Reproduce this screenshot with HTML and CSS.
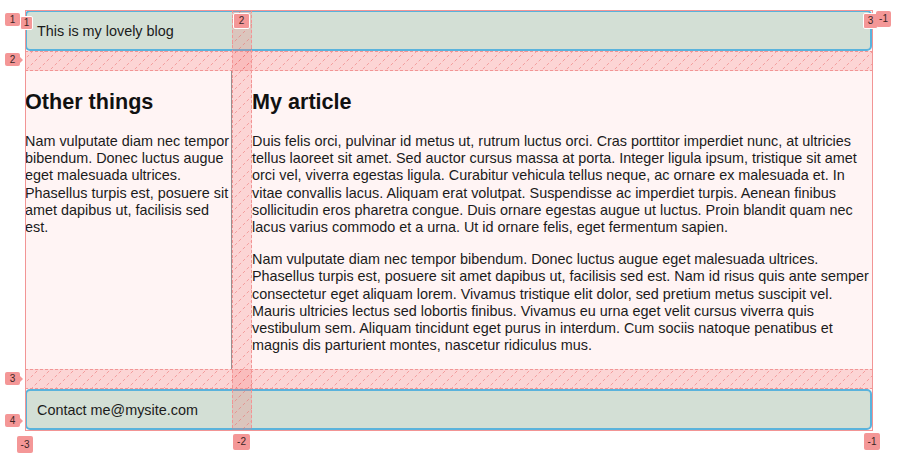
FILE: index.html
```html
<!DOCTYPE html>
<html>
<head>
<meta charset="utf-8">
<link rel="stylesheet" href="styles.css">
</head>
<body>
<div class="wrapper">
  <header class="box head">This is my lovely blog</header>
  <aside class="side">
    <h1>Other things</h1>
    <p>Nam vulputate diam nec tempor bibendum. Donec luctus augue eget malesuada ultrices. Phasellus turpis est, posuere sit amet dapibus ut, facilisis sed est.</p>
  </aside>
  <article class="main">
    <h1>My article</h1>
    <p>Duis felis orci, pulvinar id metus ut, rutrum luctus orci. Cras porttitor imperdiet nunc, at ultricies tellus laoreet sit amet. Sed auctor cursus massa at porta. Integer ligula ipsum, tristique sit amet orci vel, viverra egestas ligula. Curabitur vehicula tellus neque, ac ornare ex malesuada et. In vitae convallis lacus. Aliquam erat volutpat. Suspendisse ac imperdiet turpis. Aenean finibus sollicitudin eros pharetra congue. Duis ornare egestas augue ut luctus. Proin blandit quam nec lacus varius commodo et a urna. Ut id ornare felis, eget fermentum sapien.</p>
    <p>Nam vulputate diam nec tempor bibendum. Donec luctus augue eget malesuada ultrices. Phasellus turpis est, posuere sit amet dapibus ut, facilisis sed est. Nam id risus quis ante semper consectetur eget aliquam lorem. Vivamus tristique elit dolor, sed pretium metus suscipit vel. Mauris ultricies lectus sed lobortis finibus. Vivamus eu urna eget velit cursus viverra quis vestibulum sem. Aliquam tincidunt eget purus in interdum. Cum sociis natoque penatibus et magnis dis parturient montes, nascetur ridiculus mus.</p>
  </article>
  <footer class="box foot">Contact me@mysite.com</footer>
</div>

<svg class="overlay" width="902" height="465" viewBox="0 0 902 465">
  <defs>
    <pattern id="hatch" patternUnits="userSpaceOnUse" width="12" height="12">
      <line x1="-1" y1="13" x2="13" y2="-1" stroke="rgba(236,100,100,0.5)" stroke-width="1" stroke-dasharray="3 2.5"/>
    </pattern>
  </defs>
  <g class="gaps">
    <rect x="25" y="51" width="847" height="20" fill="rgba(244,120,120,0.25)"/>
    <rect x="25" y="369" width="847" height="20" fill="rgba(244,120,120,0.25)"/>
    <rect x="232" y="10" width="20" height="420" fill="rgba(244,120,120,0.25)"/>
    <rect x="25" y="51" width="847" height="20" fill="url(#hatch)"/>
    <rect x="25" y="369" width="847" height="20" fill="url(#hatch)"/>
    <rect x="232" y="10" width="20" height="420" fill="url(#hatch)"/>
  </g>
  <g stroke="#f29595" stroke-width="1" stroke-dasharray="3 2" fill="none">
    <line x1="25" y1="51.5" x2="872" y2="51.5"/>
    <line x1="25" y1="70.5" x2="872" y2="70.5"/>
    <line x1="25" y1="369.5" x2="872" y2="369.5"/>
    <line x1="25" y1="388.5" x2="872" y2="388.5"/>
    <line x1="232.5" y1="10" x2="232.5" y2="430"/>
    <line x1="251.5" y1="10" x2="251.5" y2="430"/>
  </g>
  <rect x="25.5" y="10.5" width="847" height="420" fill="none" stroke="#f29595" stroke-width="1"/>
</svg>

<div class="badge row" style="left:5px;top:13px">1</div>
<div class="badge row" style="left:5px;top:53px">2</div>
<div class="badge row" style="left:5px;top:372px">3</div>
<div class="badge row" style="left:5px;top:414px">4</div>

<div class="badge col" style="left:20px;top:16px;width:13px;height:14px">1</div>
<div class="badge col" style="left:233px;top:13px;width:17px;height:16px">2</div>
<div class="badge col" style="left:863px;top:13px;width:15px;height:16px">3</div>
<div class="badge plain" style="left:876px;top:11px;width:15px;height:16px">-1</div>

<div class="badge plain" style="left:17px;top:436px;width:16px;height:17px">-3</div>
<div class="badge plain" style="left:233px;top:434px;width:17px;height:16px">-2</div>
<div class="badge plain" style="left:864px;top:433px;width:16px;height:17px">-1</div>
</body>
</html>
```

FILE: styles.css
```css
html, body {
  margin: 0;
  padding: 0;
}
body {
  position: relative;
  width: 902px;
  height: 465px;
  overflow: hidden;
  background: #ffffff;
  font-family: "Liberation Sans", Arial, sans-serif;
  font-size: 14.4px;
  color: #1b1b1b;
}
.wrapper {
  margin: 10px 0 0 25px;
  width: 847px;
  display: grid;
  grid-template-columns: 207px 620px;
  grid-template-rows: 41px auto 41px;
  gap: 20px;
  background: #fff4f4;
}
.box {
  grid-column: 1 / 3;
  box-sizing: border-box;
  background: #d3dfd5;
  border: 2px solid #5ab3dc;
  border-radius: 5px;
  padding: 0 10px;
  display: flex;
  align-items: center;
  line-height: 16px;
}
.side {
  border-right: 1px solid #9a9090;
}
.side, .main {
  line-height: 1.2;
}
h1 {
  font-size: 21.6px;
  line-height: 1.2;
  margin: 17.5px 0 18.5px;
  color: #111;
}
p {
  margin: 14.4px 0;
}
.side p {
  margin-top: 0;
}
.main h1 + p {
  margin-top: 0;
}
.overlay {
  position: absolute;
  left: 0;
  top: 0;
  pointer-events: none;
}
.badge {
  position: absolute;
  box-sizing: border-box;
  background: #f49797;
  color: #3b2525;
  font-size: 10px;
  line-height: 1;
  display: flex;
  align-items: center;
  justify-content: center;
  border-radius: 2px;
}
.badge.row {
  width: 15px;
  height: 13px;
}
.badge.row::after {
  content: "";
  position: absolute;
  right: -3px;
  top: 50%;
  margin-top: -3px;
  border-left: 3px solid #f49797;
  border-top: 3px solid transparent;
  border-bottom: 3px solid transparent;
}
.badge.col {
  border: 1px solid #ffffff;
}
```
